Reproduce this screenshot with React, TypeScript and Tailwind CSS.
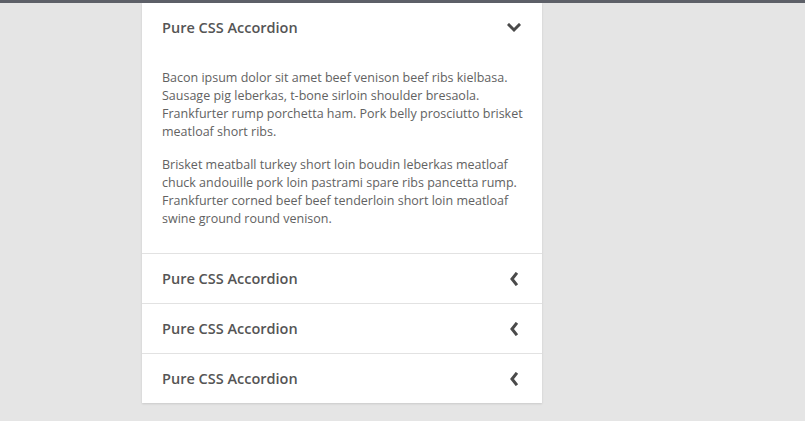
import { useState } from 'react';

const paragraphs = [
  'Bacon ipsum dolor sit amet beef venison beef ribs kielbasa. Sausage pig leberkas, t-bone sirloin shoulder bresaola. Frankfurter rump porchetta ham. Pork belly prosciutto brisket meatloaf short ribs.',
  'Brisket meatball turkey short loin boudin leberkas meatloaf chuck andouille pork loin pastrami spare ribs pancetta rump. Frankfurter corned beef beef tenderloin short loin meatloaf swine ground round venison.',
];

const Chevron = ({ open }: { open: boolean }) =>
  open ? (
    <svg width="14" height="10" viewBox="0 0 14 10" className="block">
      <polyline points="2,2 7,7 12,2" fill="none" stroke="#4a4a4a" strokeWidth="3" strokeLinecap="square" />
    </svg>
  ) : (
    <svg width="10" height="14" viewBox="0 0 10 14" className="block">
      <polyline points="7,2 3,7 7,12" fill="none" stroke="#4a4a4a" strokeWidth="3" strokeLinecap="square" />
    </svg>
  );

const App = () => {
  const [openIndex, setOpenIndex] = useState<number | null>(0);

  return (
    <div
      className="min-h-[421px] bg-[#e5e5e5] border-t-[3px] border-[#5d6068]"
      style={{ fontFamily: '"Open Sans", "Noto Sans", sans-serif' }}
    >
      <div className="ml-[142px] w-[400px] bg-white shadow-[0_1px_2px_rgba(0,0,0,0.12)]">
        {[0, 1, 2, 3].map((i) => {
          const open = openIndex === i;
          return (
            <div key={i} className={i > 0 ? 'border-t border-[#e2e2e2]' : ''}>
              <button
                onClick={() => setOpenIndex(open ? null : i)}
                className="flex h-[49px] w-full items-center justify-between pl-5 pr-[21px] text-left"
              >
                <span className="text-[14.5px] font-semibold text-[#555]">Pure CSS Accordion</span>
                <span className="flex w-[14px] justify-center">
                  <Chevron open={open} />
                </span>
              </button>
              {open && (
                <div className="pl-5 pr-[14px] pt-[17px] pb-[25px] text-[12.5px] leading-[18px] text-[#626262]">
                  {paragraphs.map((p, j) => (
                    <p key={j} className={j > 0 ? 'mt-[15px]' : ''}>
                      {p}
                    </p>
                  ))}
                </div>
              )}
            </div>
          );
        })}
      </div>
    </div>
  );
};

export default App;
